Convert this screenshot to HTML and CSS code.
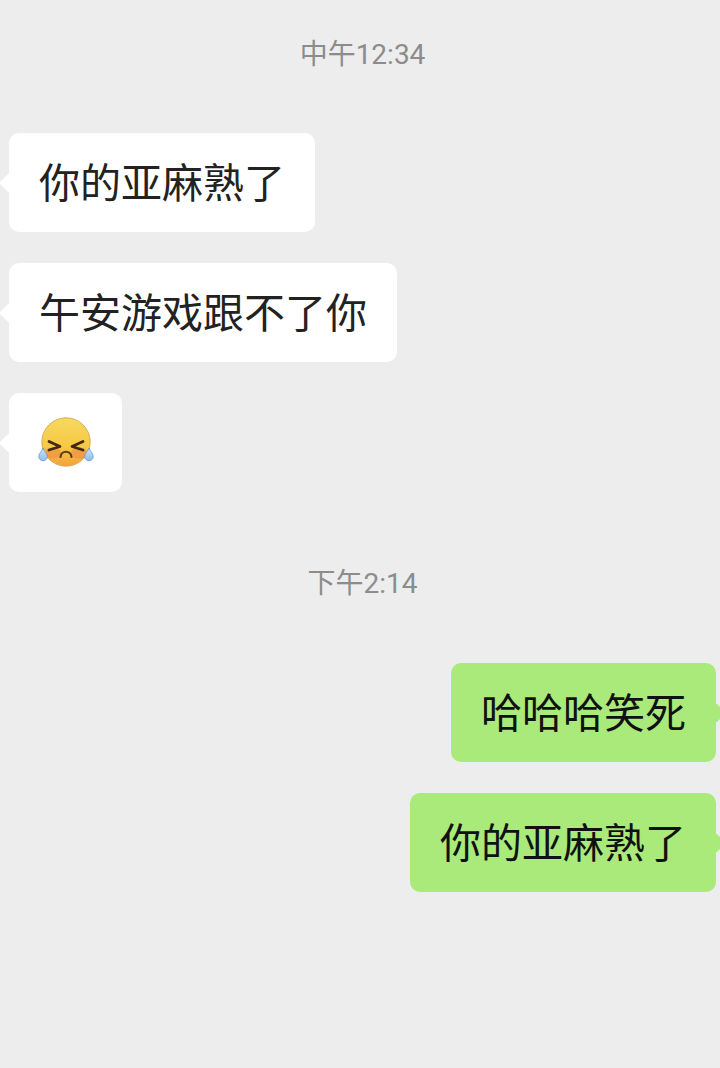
FILE: index.html
```html
<!DOCTYPE html>
<html lang="zh-CN">
<head>
    <meta charset="UTF-8">
    <meta name="viewport" content="width=device-width, initial-scale=1.0">
    <title>聊天记录</title>
    <link rel="stylesheet" href="styles.css">
</head>
<body>
    <div class="chat">
        <div class="hora hora-primera">中午12:34</div>

        <div class="fila">
            <div class="burbuja">你的亚麻熟了</div>
        </div>
        <div class="fila">
            <div class="burbuja">午安游戏跟不了你</div>
        </div>
        <div class="fila">
            <div class="burbuja burbuja-emoji">
                <svg class="emoji" viewBox="0 0 56 56" width="56" height="56">
                    <defs>
                        <linearGradient id="cara" x1="0" y1="0" x2="0" y2="1">
                            <stop offset="0" stop-color="#f6d95f"/>
                            <stop offset="0.6" stop-color="#f7c843"/>
                            <stop offset="1" stop-color="#f2a23c"/>
                        </linearGradient>
                        <linearGradient id="lagrima" x1="0" y1="0" x2="0" y2="1">
                            <stop offset="0" stop-color="#cfe6f8"/>
                            <stop offset="1" stop-color="#8fbde8"/>
                        </linearGradient>
                    </defs>
                    <circle cx="28" cy="27" r="24.2" fill="url(#cara)" stroke="#d2a653" stroke-width="0.9"/>
                    <ellipse cx="15" cy="38" rx="8" ry="5.500" fill="#f08a46" opacity="0.6"/>
                    <ellipse cx="41" cy="38" rx="8" ry="5.500" fill="#f08a46" opacity="0.6"/>
                    <path d="M11 26.500 L22 31.500 L11 35" fill="none" stroke="#43290f" stroke-width="2.800" stroke-linecap="round" stroke-linejoin="round"/>
                    <path d="M45 26.500 L34 31.500 L45 35" fill="none" stroke="#43290f" stroke-width="2.800" stroke-linecap="round" stroke-linejoin="round"/>
                    <path d="M22.500 42 C23 35 33 35 33.500 42" fill="none" stroke="#5a3d18" stroke-width="2.200" stroke-linecap="round"/>
                    <path d="M5 33 C3.500 37 0.800 38.500 0.800 41.500 C0.800 44 2.800 45.800 5 45.800 C7.200 45.800 9.400 44 9.400 41.500 C9.400 38.500 6.500 37 5 33 Z" fill="url(#lagrima)" stroke="#5f97d0" stroke-width="0.8"/>
                    <path d="M51 33 C49.500 37 46.600 38.500 46.600 41.500 C46.600 44 48.800 45.800 51 45.800 C53.200 45.800 55.200 44 55.200 41.500 C55.200 38.500 52.500 37 51 33 Z" fill="url(#lagrima)" stroke="#5f97d0" stroke-width="0.8"/>
                </svg>
            </div>
        </div>

        <div class="hora hora-segunda">下午2:14</div>

        <div class="fila fila-mia">
            <div class="burbuja burbuja-mia">哈哈哈笑死</div>
        </div>
        <div class="fila fila-mia">
            <div class="burbuja burbuja-mia">你的亚麻熟了</div>
        </div>
    </div>
</body>
</html>
```

FILE: styles.css
```css
* {
    box-sizing: border-box;
}

body {
    margin: 0;
    padding: 0;
    background-color: #ededed;
    font-family: "Noto Sans CJK SC", "Noto Sans", sans-serif;
}

.chat {
    height: 1068px;
    padding: 0 4px 0 9px;
    overflow: hidden;
}

.hora {
    height: 40px;
    line-height: 44px;
    text-align: center;
    font-family: Roboto, "Noto Sans CJK SC", sans-serif;
    font-size: 28px;
    color: #8c8c8c;
}

.hora-primera {
    margin-top: 33px;
    margin-bottom: 60px;
}

.hora-segunda {
    margin-top: 70px;
    margin-bottom: 61px;
}

.fila {
    display: flex;
    margin-bottom: 31px;
}

.fila-mia {
    justify-content: flex-end;
}

.burbuja {
    position: relative;
    height: 99px;
    padding: 0 30px 6px;
    display: flex;
    align-items: center;
    background-color: #fff;
    border-radius: 10px;
    font-size: 41px;
    color: #222;
    white-space: nowrap;
}

.burbuja::before {
    content: "";
    position: absolute;
    top: 43px;
    left: -7px;
    width: 14px;
    height: 14px;
    background-color: inherit;
    transform: rotate(45deg);
    border-radius: 2px;
}

.burbuja-emoji {
    width: 113px;
    padding: 0;
    justify-content: center;
}

.burbuja-mia {
    background-color: #a9ea7a;
    color: #111;
}

.burbuja-mia::before {
    left: auto;
    right: -7px;
}

.emoji {
    display: block;
}
```
